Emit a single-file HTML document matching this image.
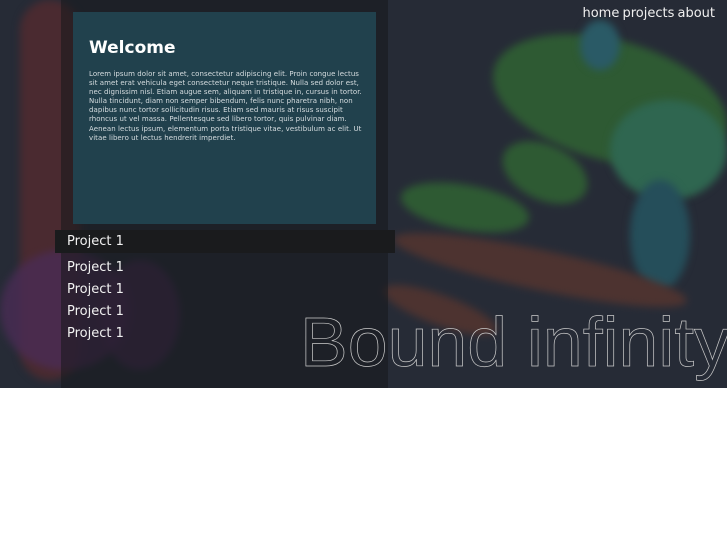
<!DOCTYPE html>
<html><head><style>
*{margin:0;padding:0}
body{width:727px;height:545px;background:#fff;position:relative;overflow:hidden;font-family:"DejaVu Sans","Liberation Sans",sans-serif}
#hero{position:absolute;left:0;top:0;width:727px;height:388px;background:#262b36;overflow:hidden}
.b{position:absolute;border-radius:50%;filter:blur(4px)}
#panel{position:absolute;left:61px;top:0;width:327px;height:388px;background:rgba(22,24,28,.55)}
#card{position:absolute;left:73px;top:12px;width:303px;height:212px;background:#21414d}
#card h1{position:absolute;left:16px;top:26px;font-size:17px;font-weight:bold;color:#fff}
#card p{position:absolute;left:16px;top:58px;white-space:nowrap;font-size:7px;line-height:9.1px;color:#d6dde0;letter-spacing:0.05px}
#bar{position:absolute;left:55px;top:230px;width:340px;height:23px;background:#1a1b1d}
.p{position:absolute;left:67px;font-size:13px;color:#f2f2f2}
#nav{position:absolute;right:12px;top:6px;font-size:13px;color:#f0f0f0;word-spacing:-1px}
</style></head><body>
<div id="hero">
<div class="b" style="left:20px;top:0;width:60px;height:380px;background:#4a2a30;border-radius:30px"></div>
<div class="b" style="left:0;top:250px;width:130px;height:120px;background:#4a2c55;opacity:.8"></div>
<div class="b" style="left:100px;top:260px;width:80px;height:110px;background:#4a2c55;opacity:.7"></div>
<div class="b" style="left:490px;top:40px;width:240px;height:120px;background:#2e5a33;transform:rotate(15deg)"></div>
<div class="b" style="left:610px;top:100px;width:117px;height:100px;background:#2f6650"></div>
<div class="b" style="left:500px;top:145px;width:90px;height:55px;background:#2e5a33;transform:rotate(25deg)"></div>
<div class="b" style="left:400px;top:185px;width:130px;height:45px;background:#2e5a33;transform:rotate(10deg)"></div>
<div class="b" style="left:630px;top:180px;width:60px;height:110px;background:#254e5a"></div>
<div class="b" style="left:580px;top:20px;width:40px;height:50px;background:#2a5a66"></div>
<div class="b" style="left:390px;top:250px;width:300px;height:40px;background:#4d3330;transform:rotate(12deg)"></div>
<div class="b" style="left:380px;top:295px;width:120px;height:30px;background:#4d3330;transform:rotate(20deg)"></div>
<div id="panel"></div>
<div id="card"><h1>Welcome</h1><p>Lorem ipsum dolor sit amet, consectetur adipiscing elit. Proin congue lectus<br>sit amet erat vehicula eget consectetur neque tristique. Nulla sed dolor est,<br>nec dignissim nisl. Etiam augue sem, aliquam in tristique in, cursus in tortor.<br>Nulla tincidunt, diam non semper bibendum, felis nunc pharetra nibh, non<br>dapibus nunc tortor sollicitudin risus. Etiam sed mauris at risus suscipit<br>rhoncus ut vel massa. Pellentesque sed libero tortor, quis pulvinar diam.<br>Aenean lectus ipsum, elementum porta tristique vitae, vestibulum ac elit. Ut<br>vitae libero ut lectus hendrerit imperdiet.</p></div>
<div id="bar"></div>
<div class="p" style="top:234px">Project 1</div>
<div class="p" style="top:260px">Project 1</div>
<div class="p" style="top:282px">Project 1</div>
<div class="p" style="top:304px">Project 1</div>
<div class="p" style="top:326px">Project 1</div>
<div id="nav">home projects about</div>
<svg style="position:absolute;left:0;top:0" width="727" height="388"><text x="300" y="366" font-family="Liberation Sans" font-size="70" fill="none" stroke="#c8c8c8" stroke-width="0.7" textLength="430" lengthAdjust="spacingAndGlyphs">Bound infinity</text></svg>
</div>
</body></html>
